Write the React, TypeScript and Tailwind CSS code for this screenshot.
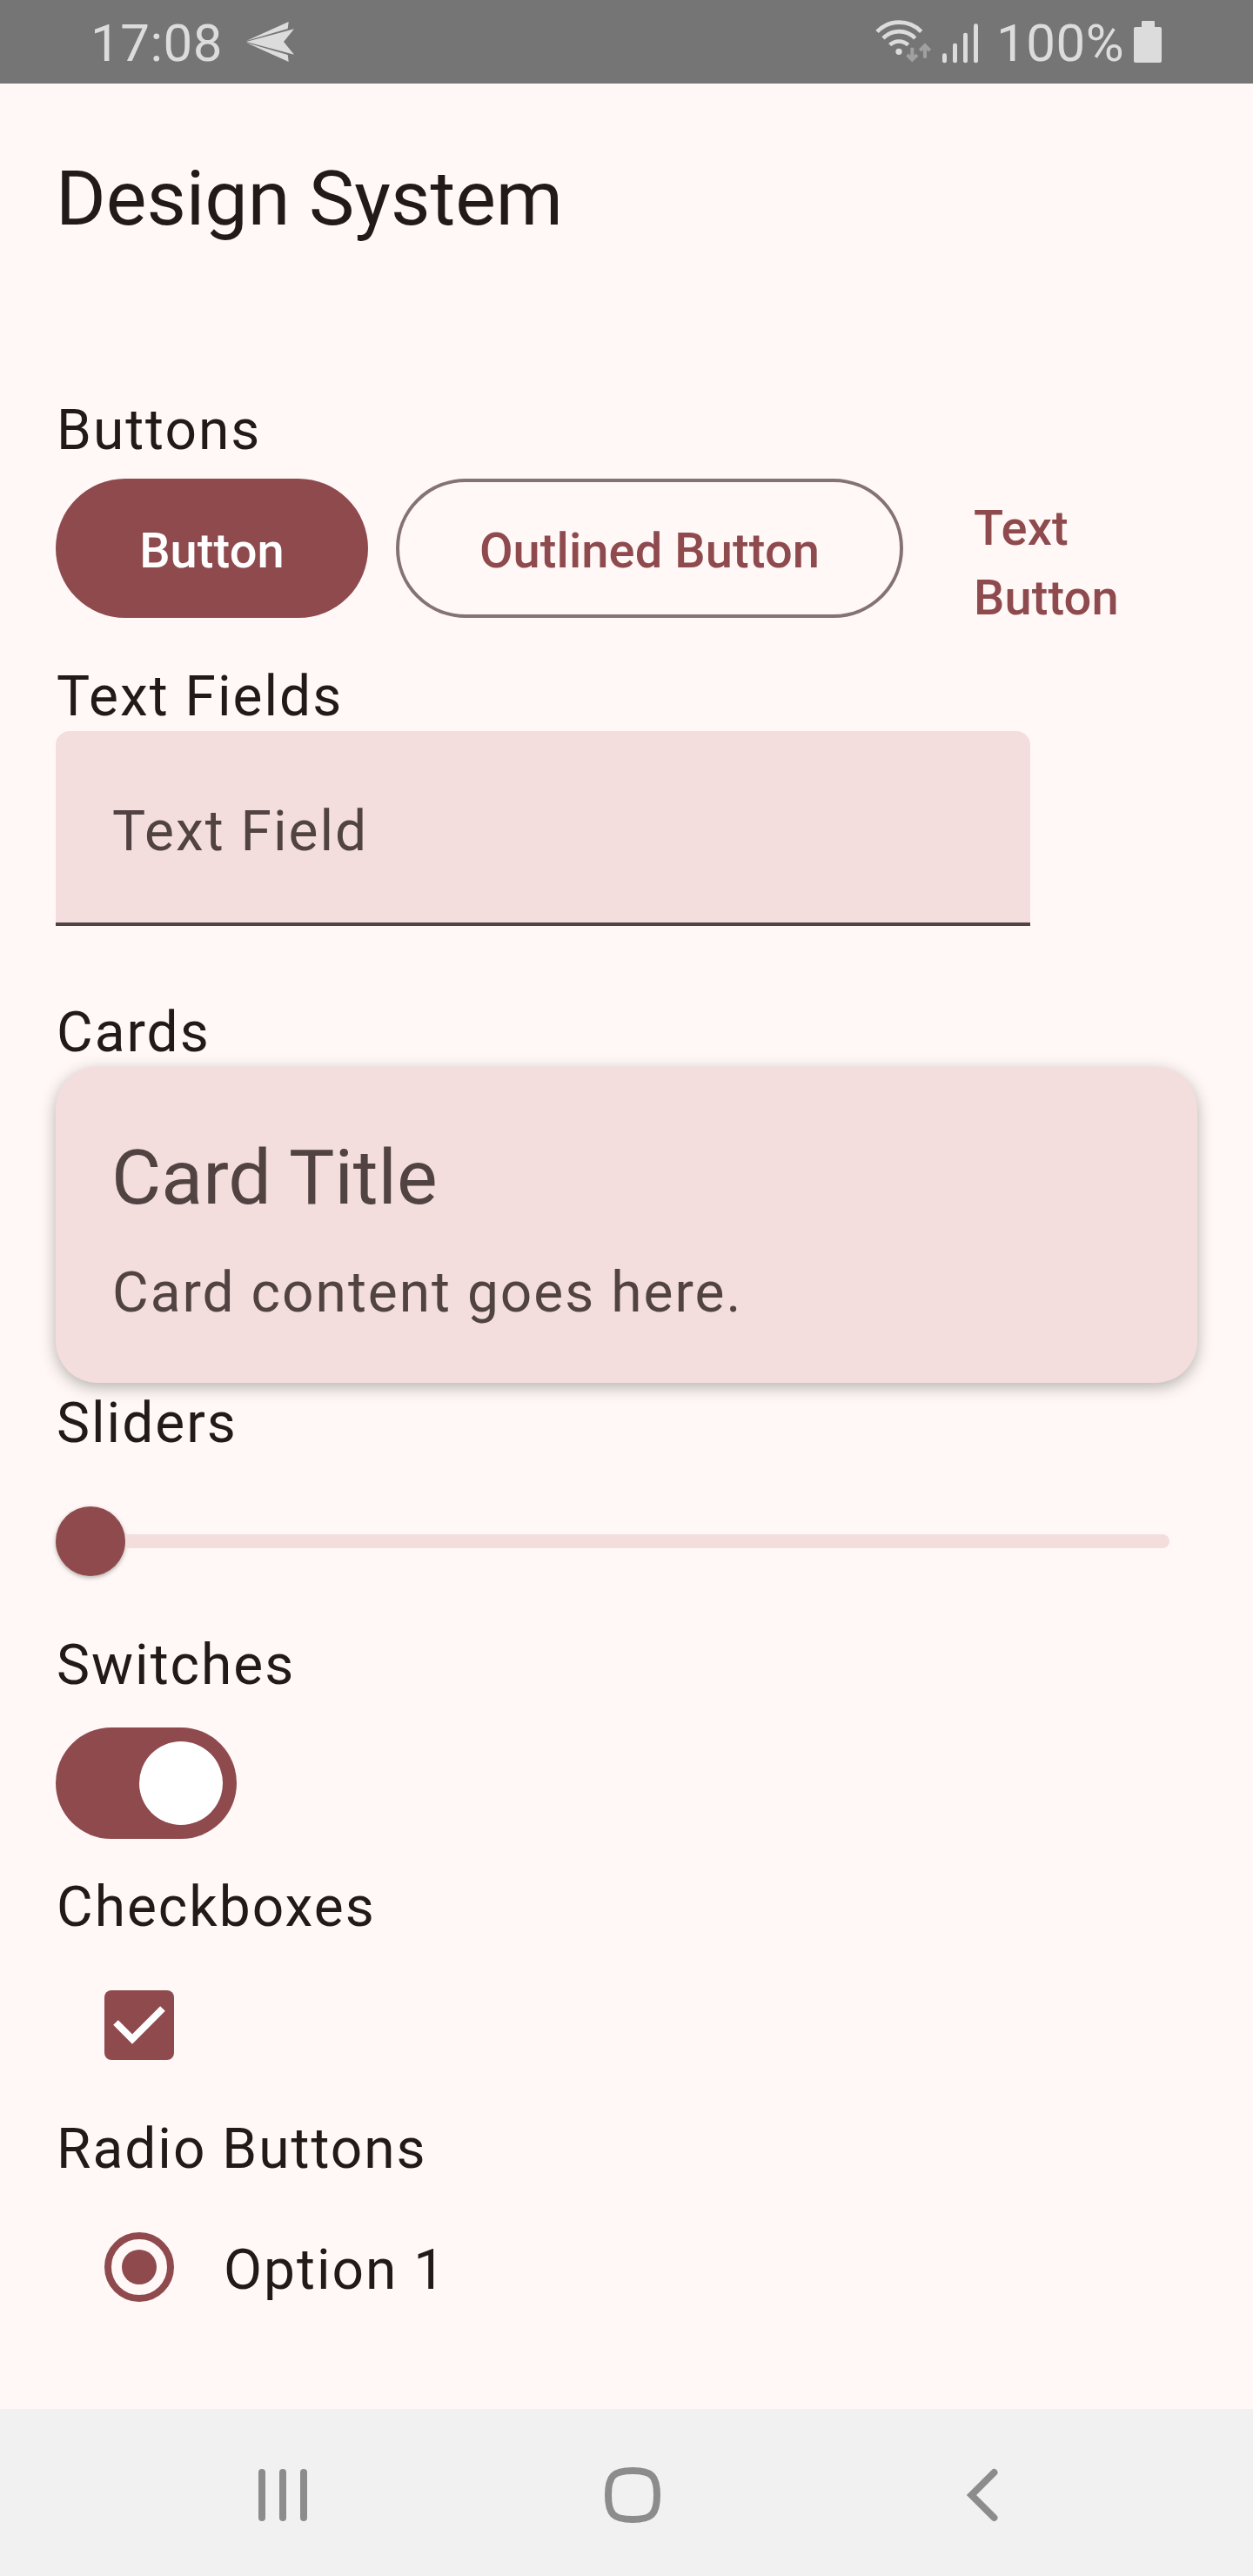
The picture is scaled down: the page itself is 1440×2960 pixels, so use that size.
import type { ReactNode } from "react";

const STATUS = "#dcdcdc";

function PlaneIcon() {
  return (
    <svg className="ml-[26px] h-[48px] w-[58px]" viewBox="0 0 174 144" fill={STATUS}>
      <path d="M3 72 168 28 132 72 168 116Z" />
      <path d="M3 69 149 3 146 27Z" />
      <path d="M3 75 149 141 146 117Z" />
    </svg>
  );
}

function WifiIcon() {
  return (
    <svg className="h-[50px] w-[66px]" viewBox="75 70 198 150" fill="none">
      <g stroke={STATUS} strokeWidth="14">
        <path d="M84 110A106 106 0 0 1 236 110" />
        <path d="M105 133A76 76 0 0 1 215 133" />
        <path d="M128 156A46 46 0 0 1 191 156" />
      </g>
      <circle cx="159" cy="179" r="11" fill={STATUS} />
      <g stroke="#a0a0a0" strokeWidth="12">
        <path d="M205 165V208M188 190 205 207 222 190" />
        <path d="M249 201V157M232 175 249 158 266 175" />
      </g>
    </svg>
  );
}

function SignalIcon() {
  return (
    <svg className="ml-[11px] h-[46px] w-[44px]" viewBox="306 80 132 138" fill={STATUS}>
      <rect x="309" y="183" width="15" height="33" rx="7" />
      <rect x="345" y="148" width="15" height="68" rx="7" />
      <rect x="381" y="112" width="15" height="104" rx="7" />
      <rect x="417" y="81" width="15" height="135" rx="7" />
    </svg>
  );
}

function BatteryIcon() {
  return (
    <svg className="h-[48px] w-[32px]" viewBox="0 0 32 48" fill={STATUS}>
      <path d="M9 1a1 1 0 0 1 1-1h13a1 1 0 0 1 1 1v6h6a2 2 0 0 1 2 2v37a2 2 0 0 1-2 2H2a2 2 0 0 1-2-2V9a2 2 0 0 1 2-2h7Z" />
    </svg>
  );
}

function StatusBar() {
  return (
    <header className="flex h-[96px] items-start justify-between bg-[#757575] pr-[105px] pl-[104px] text-[60px] leading-[100px] text-[#dcdcdc]">
      <div className="flex items-start">
        <span className="tracking-[0.5px]">17:08</span>
        <span className="flex pt-[24px]">
          <PlaneIcon />
        </span>
      </div>
      <div className="flex items-start">
        <span className="flex pt-[23px]">
          <WifiIcon />
        </span>
        <span className="flex pt-[27px]">
          <SignalIcon />
        </span>
        <span className="ml-[19px] w-[158px] tracking-[0.5px]">100%</span>
        <span className="flex pt-[24px]">
          <BatteryIcon />
        </span>
      </div>
    </header>
  );
}

function Label({ children }: { children: ReactNode }) {
  return <h2 className="relative h-[86px] pl-px text-[64px] leading-[94px] tracking-[2px]">{children}</h2>;
}

function Buttons() {
  return (
    <div className="flex h-[220px] text-[56px] leading-[80px] font-medium tracking-[0.1px]">
      <button className="mt-[16px] h-[160px] w-[359px] rounded-full bg-[#8f4a4e] pt-[6px] text-white">Button</button>
      <button className="mt-[16px] ml-[32px] h-[160px] w-[583px] rounded-full border-4 border-[#857373] pt-[6px] text-[#8f4a4e]">
        Outlined Button
      </button>
      <button className="ml-[33px] w-[257px] px-[48px] pt-[6px] text-left text-[#8f4a4e]">Text Button</button>
    </div>
  );
}

function NavBar() {
  return (
    <nav className="flex h-[192px] items-start bg-[#f1f1f1] pt-[64px]">
      <svg className="ml-[293px] h-[70px] w-[64px]" viewBox="293 2832 64 70" fill="#8c8c8c">
        <rect x="297" y="2837" width="8" height="60" rx="4" />
        <rect x="321" y="2837" width="8" height="60" rx="4" />
        <rect x="345" y="2837" width="8" height="60" rx="4" />
      </svg>
      <svg className="ml-[334px] h-[70px] w-[72px]" viewBox="691 2832 72 70" fill="none" stroke="#8c8c8c" strokeWidth="8">
        <path d="M727 2839C749 2839 755 2845 755 2867S749 2895 727 2895 699 2889 699 2867 705 2839 727 2839Z" />
      </svg>
      <svg
        className="ml-[344px] h-[70px] w-[44px]"
        viewBox="1107 2832 44 70"
        fill="none"
        stroke="#8c8c8c"
        strokeWidth="8"
        strokeLinecap="round"
      >
        <path d="M1142.5 2841 1116.5 2867 1142.5 2893" />
      </svg>
    </nav>
  );
}

export default function App() {
  return (
    <div className="flex h-[2960px] w-[1440px] flex-col overflow-hidden bg-[#fff8f7] font-['Roboto',sans-serif] text-[#221919]">
      <StatusBar />
      <h1 className="h-[352px] px-[64px] pt-[76px] text-[88px] leading-[112px]">Design System</h1>
      <main className="flex h-[2320px] flex-col px-[64px]">
        <Label>Buttons</Label>
        <Buttons />

        <Label>Text Fields</Label>
        <div className="mb-[76px] h-[224px] w-[1120px] rounded-t-[16px] border-b-4 border-[#524343] bg-[#f4dddd] px-[65px] pt-[69px] text-[64px] leading-[94px] tracking-[2px] text-[#524343]">
          Text Field
        </div>

        <Label>Cards</Label>
        <section className="h-[363px] rounded-[48px] bg-[#f4dddd] px-[64px] pt-[71px] text-[#524343] shadow-[0_5px_18px_rgba(40,40,30,0.34)]">
          <h3 className="text-[88px] leading-[112px]">Card Title</h3>
          <p className="pt-[30px] pl-px text-[64px] leading-[94px] tracking-[2px]">Card content goes here.</p>
        </section>

        <Label>Sliders</Label>
        <div className="flex h-[192px] w-[1280px] items-center">
          <span className="size-[80px] rounded-full bg-[#8f4a4e] shadow-[0_2px_5px_rgba(40,40,30,0.35)]" />
          <span className="h-[16px] flex-1 rounded-r-full bg-[#f4dddd]" />
        </div>

        <Label>Switches</Label>
        <div className="flex h-[192px] items-center">
          <button className="flex h-[128px] w-[208px] items-center justify-end rounded-full bg-[#8f4a4e] pr-[16px]">
            <span className="size-[96px] rounded-full bg-white" />
          </button>
        </div>

        <Label>Checkboxes</Label>
        <div className="flex h-[192px] items-center pl-[56px]">
          <svg className="size-[80px] rounded-[8px] bg-[#8f4a4e]" viewBox="0 0 80 80" fill="none" stroke="white" strokeWidth="8">
            <path d="M13 37 32 56 67 21" />
          </svg>
        </div>

        <Label>Radio Buttons</Label>
        <div className="flex h-[192px] items-center pl-[56px]">
          <span className="flex size-[80px] items-center justify-center rounded-full border-8 border-[#8f4a4e]">
            <span className="size-[40px] rounded-full bg-[#8f4a4e]" />
          </span>
          <span className="ml-[57px] h-[86px] text-[64px] leading-[94px] tracking-[2px]">Option 1</span>
        </div>
      </main>
      <NavBar />
    </div>
  );
}
